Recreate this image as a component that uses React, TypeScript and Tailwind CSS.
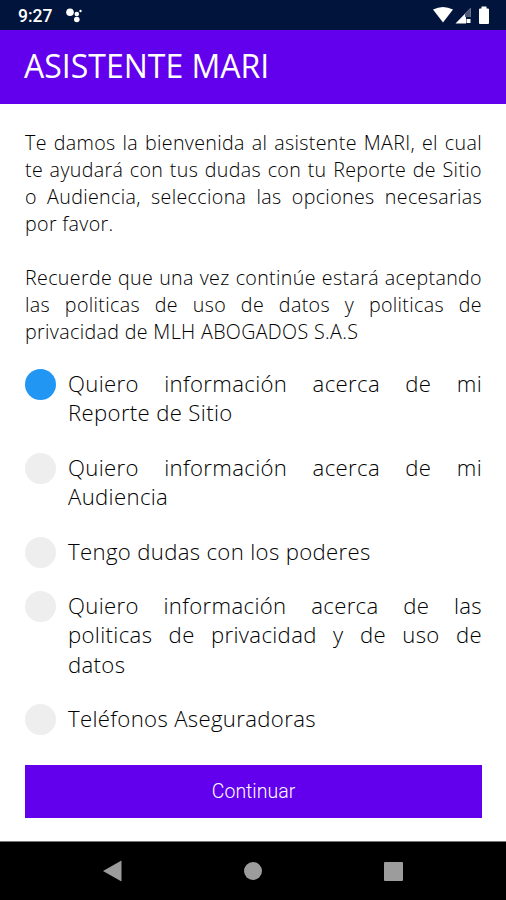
import React, { useState } from 'react';

const OPTIONS = [
  { key: 'reporte', label: 'Quiero información acerca de mi Reporte de Sitio' },
  { key: 'audiencia', label: 'Quiero información acerca de mi Audiencia' },
  { key: 'poderes', label: 'Tengo dudas con los poderes' },
  { key: 'politicas', label: 'Quiero información acerca de las politicas de privacidad y de uso de datos' },
  { key: 'telefonos', label: 'Teléfonos Aseguradoras' },
];

const StatusBar: React.FC = () => (
  <div className="h-[30px] shrink-0 bg-[#00143c] flex items-center justify-between pl-[18px] pr-[16px] text-white">
    <div className="flex items-center gap-[14px]">
      <span className="font-['Roboto',sans-serif] text-[17.500px] leading-[30px] font-medium pt-[1px]">9:27</span>
      <svg width="18" height="16" viewBox="0 0 18 16" fill="currentColor">
        <circle cx="4" cy="5.300" r="3.800" />
        <circle cx="10.800" cy="7" r="2.300" />
        <circle cx="10.800" cy="12.500" r="2.800" />
        <circle cx="14.500" cy="4" r="1.200" />
      </svg>
    </div>
    <div className="flex items-center">
      <svg width="57" height="18" viewBox="0 0 57 18" fill="currentColor">
        <path d="M0 3.500Q10 -1.500 20 3.500L10 16.500Z" />
        <path d="M37.500 2V11H33V17.500H22.500Z" />
        <path d="M37.500 2V11H32V7.500Z" fill="#4d5b79" />
        <rect x="33.500" y="13" width="4" height="4" />
        <path d="M48.500 0.500h5v2h1.500q1 0 1 1v13.500q0 1-1 1h-8q-1 0-1-1V3.500q0-1 1-1h1.500z" />
      </svg>
    </div>
  </div>
);

const NavBar: React.FC = () => (
  <div className="h-[59px] shrink-0 bg-black border-t border-[#777] flex items-center justify-between pl-[103px] pr-[103px] text-[#9c9c9c]">
    <svg width="19" height="22" viewBox="0 0 19 22" fill="currentColor">
      <path d="M0 11L18.500 0.500V21.500Z" />
    </svg>
    <div className="size-[18px] rounded-full bg-current" />
    <div className="size-[19px] rounded-[1px] bg-current" />
  </div>
);

const App: React.FC = () => {
  const [selected, setSelected] = useState('reporte');

  return (
    <div className="w-full h-[900px] flex flex-col bg-white font-['Open_Sans',sans-serif] text-black overflow-hidden">
      <StatusBar />
      <header className="h-[74px] shrink-0 bg-[#6200ee] flex items-center px-6 pb-[2px]">
        <h1 className="text-[32px] leading-none text-white">ASISTENTE MARI</h1>
      </header>

      <main className="flex-1 flex flex-col pl-[25px] pr-[24px] pt-[25px]">
        <div className="flex flex-col gap-[27px] text-[19.650px] leading-[27px] font-light tracking-[0.350px] text-justify">
          <p>
            Te damos la bienvenida al asistente MARI, el cual te ayudará con tus dudas con tu Reporte de Sitio o
            Audiencia, selecciona las opciones necesarias por favor.
          </p>
          <p>
            Recuerde que una vez continúe estará aceptando las politicas de uso de datos y politicas de privacidad de
            MLH ABOGADOS S.A.S
          </p>
        </div>

        <div className="mt-[24px] flex flex-col gap-[25px]">
          {OPTIONS.map(option => (
            <button
              key={option.key}
              onClick={() => setSelected(option.key)}
              className="flex items-start gap-[12px] text-left"
            >
              <span
                className={`size-[31px] -mb-[2px] shrink-0 rounded-full ${
                  selected === option.key ? 'bg-[#2196f3]' : 'bg-[#eeeeee]'
                }`}
              />
              <span className="flex-1 text-[22.150px] leading-[29.400px] font-light tracking-[0.350px] text-justify">
                {option.label}
              </span>
            </button>
          ))}
        </div>

        <button className="mt-[31px] h-[53px] bg-[#6200ee] text-[19.500px] text-white font-['Roboto',sans-serif] font-light">
          Continuar
        </button>
      </main>

      <NavBar />
    </div>
  );
};

export default App;
